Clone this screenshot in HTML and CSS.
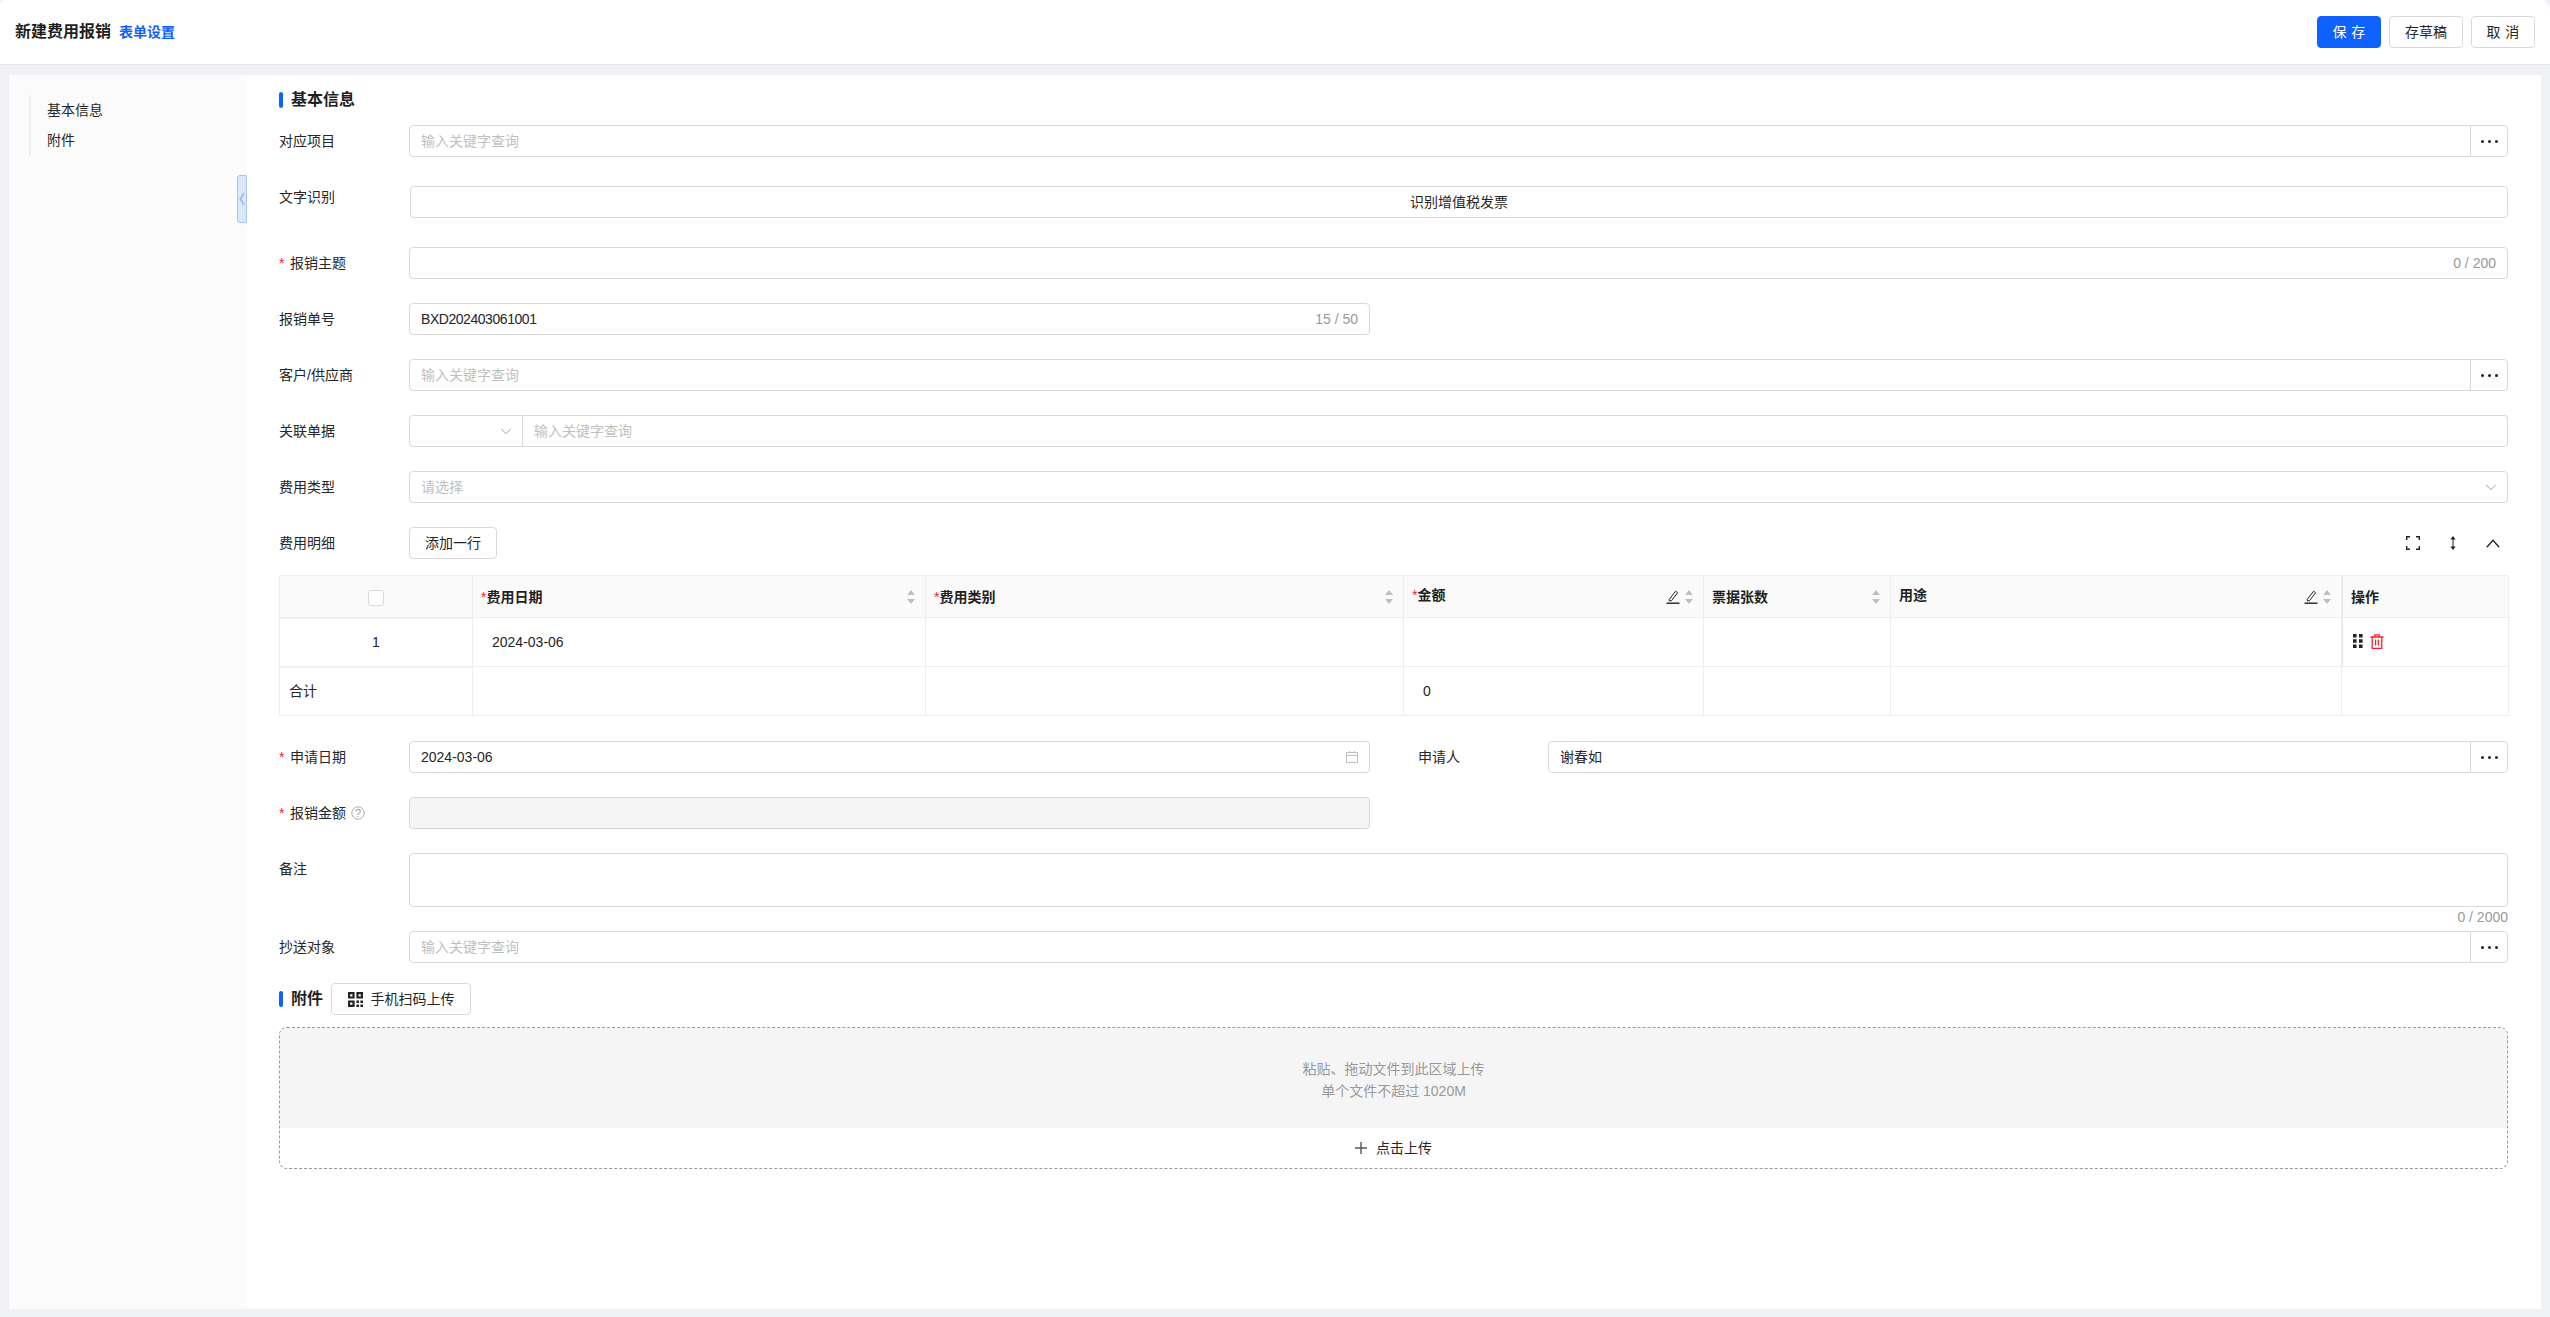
FILE: index.html
```html
<!DOCTYPE html>
<html lang="zh-CN">
<head>
<meta charset="utf-8">
<title>新建费用报销</title>
<link rel="stylesheet" href="styles.css">
</head>
<body>
<header class="topbar">
  <h1 class="page-title">新建费用报销</h1>
  <a class="form-link">表单设置</a>
  <div class="top-actions">
    <button class="btn btn-primary btn-spaced"><span>保存</span></button>
    <button class="btn btn-draft">存草稿</button>
    <button class="btn btn-spaced"><span>取消</span></button>
  </div>
</header>
<main class="shell">
  <aside class="side">
    <nav class="side-nav">
      <div class="side-item">基本信息</div>
      <div class="side-item">附件</div>
    </nav>
    <div class="side-tab"><svg width="6" height="14" viewBox="0 0 6 14"><path d="M5 1 1.5 7 5 13" fill="none" stroke="#9dbdf7" stroke-width="2"/></svg></div>
  </aside>
  <section class="form">
    <h2 class="section-title">基本信息</h2>

    <div class="row">
      <div class="label">对应项目</div>
      <div class="field picker"><span class="ph">输入关键字查询</span><span class="more"><i></i><i></i><i></i></span></div>
    </div>
    <div class="row row-ocr">
      <div class="label label-short">文字识别</div>
      <div class="field field-btn">识别增值税发票</div>
    </div>
    <div class="row">
      <div class="label"><b class="req">*</b>报销主题</div>
      <div class="field"><span class="count">0 / 200</span></div>
    </div>
    <div class="split">
      <div class="row">
        <div class="label">报销单号</div>
        <div class="field"><span class="code">BXD202403061001</span><span class="count">15 / 50</span></div>
      </div>
    </div>
    <div class="row">
      <div class="label">客户/供应商</div>
      <div class="field picker"><span class="ph">输入关键字查询</span><span class="more"><i></i><i></i><i></i></span></div>
    </div>
    <div class="row">
      <div class="label">关联单据</div>
      <div class="joined">
        <div class="field join-select"><svg class="chev" width="12" height="12" viewBox="0 0 12 12"><path d="M1 3.8 6 8.6 11 3.8" fill="none" stroke="#bfbfbf" stroke-width="1.1"/></svg></div>
        <div class="field join-input"><span class="ph">输入关键字查询</span></div>
      </div>
    </div>
    <div class="row">
      <div class="label">费用类型</div>
      <div class="field"><span class="ph">请选择</span><svg class="chev" width="12" height="12" viewBox="0 0 12 12"><path d="M1 3.8 6 8.6 11 3.8" fill="none" stroke="#bfbfbf" stroke-width="1.1"/></svg></div>
    </div>
    <div class="row row-detail">
      <div class="label">费用明细</div>
      <button class="btn btn-add">添加一行</button>
      <div class="tools">
        <svg width="14" height="14" viewBox="0 0 14 14"><path d="M.7 4V.7H4M10 .7h3.3V4M13.3 10v3.3H10M4 13.3H.7V10" fill="none" stroke="#222" stroke-width="1.4"/></svg>
        <svg width="8" height="14" viewBox="0 0 8 14"><path d="M4 2v10" stroke="#222" stroke-width="1"/><path d="M4 0 6.6 3.4H1.4zM4 14 1.4 10.6H6.6z" fill="#222"/></svg>
        <svg width="14" height="9" viewBox="0 0 14 9"><path d="M.8 8.2 7 1.2 13.2 8.2" fill="none" stroke="#222" stroke-width="1.3"/></svg>
      </div>
    </div>

    <table class="grid">
      <colgroup>
        <col class="c-idx"><col class="c-date"><col class="c-type"><col class="c-amt"><col class="c-num"><col class="c-use"><col class="c-op">
      </colgroup>
      <thead>
        <tr>
          <th class="th-check"><span class="check"></span></th>
          <th><div class="th-in"><span><b class="star">*</b>费用日期</span><span class="sort"></span></div></th>
          <th><div class="th-in"><span><b class="star">*</b>费用类别</span><span class="sort"></span></div></th>
          <th><div class="th-in"><span class="raised"><b class="star">*</b>金额</span><svg class="pen" width="14" height="14" viewBox="0 0 14 14"><path d="M3.2 9.4 9.6 1.2l2 1.6-6.2 8H3.2z" fill="none" stroke="#222" stroke-width="1"/><path d="M.5 13.2h13" stroke="#222" stroke-width="1.4"/></svg><span class="sort"></span></div></th>
          <th><div class="th-in"><span>票据张数</span><span class="sort"></span></div></th>
          <th><div class="th-in"><span class="raised">用途</span><svg class="pen" width="14" height="14" viewBox="0 0 14 14"><path d="M3.2 9.4 9.6 1.2l2 1.6-6.2 8H3.2z" fill="none" stroke="#222" stroke-width="1"/><path d="M.5 13.2h13" stroke="#222" stroke-width="1.4"/></svg><span class="sort"></span></div></th>
          <th class="th-op">操作</th>
        </tr>
      </thead>
      <tbody>
        <tr>
          <td class="td-idx">1</td>
          <td class="td-val">2024-03-06</td>
          <td></td><td></td><td></td><td></td>
          <td class="td-op">
            <svg width="10" height="14" viewBox="0 0 10 14"><path d="M0 0h3.6v3.6H0zM6 0h3.6v3.6H6zM0 5.2h3.6v3.6H0zM6 5.2h3.6v3.6H6zM0 10.4h3.6V14H0zM6 10.4h3.6V14H6z" fill="#222"/></svg>
            <svg width="14" height="15" viewBox="0 0 14 15"><path d="M.5 3h13M4.8 3V.8h4.4V3M2.2 3v11.3h9.6V3M5.6 5.6v6M8.4 5.6v6" fill="none" stroke="#f5222d" stroke-width="1.3"/></svg>
          </td>
        </tr>
        <tr>
          <td class="td-sum">合计</td>
          <td></td><td></td>
          <td class="td-val">0</td>
          <td></td><td></td><td></td>
        </tr>
      </tbody>
    </table>

    <div class="split split-after-table">
      <div class="row">
        <div class="label"><b class="req">*</b>申请日期</div>
        <div class="field"><span>2024-03-06</span><svg class="chev" width="14" height="14" viewBox="0 0 14 14"><path d="M1.5 2.5h11v10h-11zM1.5 5.5h11M4.5 1v2.5M9.5 1v2.5" fill="none" stroke="#bfbfbf" stroke-width="1"/></svg></div>
      </div>
      <div class="row">
        <div class="label">申请人</div>
        <div class="field picker"><span>谢春如</span><span class="more"><i></i><i></i><i></i></span></div>
      </div>
    </div>
    <div class="split">
      <div class="row">
        <div class="label"><b class="req">*</b>报销金额<svg class="help" width="14" height="14" viewBox="0 0 14 14"><circle cx="7" cy="7" r="6.2" fill="none" stroke="#aaa"/><text x="7" y="10.8" text-anchor="middle" class="help-q">?</text></svg></div>
        <div class="field field-off"></div>
      </div>
    </div>
    <div class="row row-note">
      <div class="label">备注</div>
      <div class="note-wrap">
        <div class="field field-area"></div>
        <div class="note-count">0 / 2000</div>
      </div>
    </div>
    <div class="row row-cc">
      <div class="label">抄送对象</div>
      <div class="field picker"><span class="ph">输入关键字查询</span><span class="more"><i></i><i></i><i></i></span></div>
    </div>

    <div class="attach-head">
      <h2 class="section-title section-inline">附件</h2>
      <button class="btn btn-qr">
        <svg width="15" height="15" viewBox="0 0 15 15"><path d="M0 0h6.6v6.6H0zM2.2 2.2v2.2h2.2V2.2zM8.4 0H15v6.6H8.4zM10.6 2.2v2.2h2.2V2.2zM0 8.4h6.6V15H0zM2.2 10.6v2.2h2.2v-2.2z" fill="#222" fill-rule="evenodd"/><path d="M8.4 8.4h2.6V11H8.4zM12.4 8.4H15V11h-2.6zM8.4 12.4h2.6V15H8.4zM12.4 12.4H15V15h-2.6z" fill="#222"/></svg>
        手机扫码上传
      </button>
    </div>
    <div class="upload">
      <div class="drop">
        <div>粘贴、拖动文件到此区域上传</div>
        <div>单个文件不超过 1020M</div>
      </div>
      <div class="pick">
        <svg width="12" height="12" viewBox="0 0 12 12"><path d="M6 0v12M0 6h12" stroke="#555" stroke-width="1.4"/></svg>
        <span>点击上传</span>
      </div>
    </div>
  </section>
</main>
</body>
</html>
```

FILE: styles.css
```css
* { box-sizing: border-box; }
html, body { margin: 0; height: 100%; }
body {
  background: #f0f1f5;
  color: #262626;
  font: 14px/22px "Liberation Sans", "Noto Sans CJK SC", sans-serif;
  overflow: hidden;
  display: flex;
  flex-direction: column;
}
.topbar {
  height: 65px;
  flex: none;
  background: #fff;
  border-bottom: 1px solid #e8e8e8;
  border-radius: 5px 10px 0 0;
  display: flex;
  align-items: center;
  padding: 0 15px;
}
.page-title { margin: 0; font-size: 16px; font-weight: 700; color: #1f1f1f; }
.form-link { margin-left: 8px; color: #0f62fe; font-weight: 700; }
.top-actions { margin-left: auto; display: flex; gap: 8px; }
.btn {
  height: 32px;
  background: #fff;
  border: 1px solid #d9d9d9;
  border-radius: 4px;
  font: inherit;
  color: #262626;
  padding: 0;
}
.btn-spaced { width: 64px; }
.btn-spaced span { letter-spacing: .34em; margin-right: -.34em; }
.btn-primary { background: #0f62fe; border-color: #0f62fe; color: #fff; }
.btn-draft { width: 74px; }
.btn-add { width: 88px; }
.btn-qr {
  width: 140px;
  margin-left: 8px;
  display: flex;
  align-items: center;
  justify-content: center;
  gap: 8px;
}

.shell {
  flex: 1;
  margin: 10px 9px 8px;
  display: flex;
  min-height: 0;
  background: #fff;
}
.side { width: 238px; flex: none; background: #fbfbfc; padding: 20px 0 0 20px; position: relative; }
.side-nav { border-left: 2px solid #eeeeee; padding-left: 16px; }
.side-item { height: 30px; line-height: 30px; }
.side-tab {
  position: absolute;
  right: 0;
  top: 100px;
  width: 10px;
  height: 48px;
  background: #dbe8ff;
  border: 1px solid #a9c6fb;
  border-radius: 3px 0 0 3px;
  display: flex;
  align-items: center;
  justify-content: center;
}

.form { flex: 1; min-width: 0; padding: 14px 33px 0 32px; }
.section-title {
  margin: 0 0 14px;
  font-size: 16px;
  font-weight: 700;
  line-height: 22px;
  color: #1f1f1f;
  display: flex;
  align-items: center;
  gap: 8px;
}
.section-title::before {
  content: "";
  width: 4px;
  height: 16px;
  background: #0f62fe;
  border-radius: 2px;
}
.section-inline { margin: 0; }

.row { display: flex; margin-bottom: 24px; }
.row-ocr { margin-bottom: 29px; margin-top: 29px; }
.label { width: 130px; flex: none; line-height: 32px; display: flex; align-items: center; height: 32px; }
.label-short { height: 22px; line-height: 22px; }
.req { color: #f5222d; font-weight: 400; width: 11px; flex: none; }
.help { margin-left: 5px; }
.help-q { font-size: 11px; fill: #999; }

.field {
  flex: 1;
  min-width: 0;
  height: 32px;
  border: 1px solid #d9d9d9;
  border-radius: 4px;
  background: #fff;
  padding: 0 11px;
  display: flex;
  align-items: center;
  justify-content: space-between;
  line-height: 30px;
}
.ph { color: #bfbfbf; }
.code { letter-spacing: -.45px; }
.count { color: #999; margin-left: auto; }
.chev { flex: none; margin-left: auto; margin-right: -1px; }
.picker { padding-right: 0; }
.more {
  width: 37px;
  height: 30px;
  border-left: 1px solid #d9d9d9;
  display: flex;
  align-items: center;
  justify-content: center;
  gap: 4px;
  margin-left: auto;
}
.more i { width: 3px; height: 3px; border-radius: 50%; background: #222; }
.field-btn { justify-content: center; margin-left: 1px; }
.field-off { background: #f5f5f5; }
.joined { flex: 1; display: flex; min-width: 0; }
.join-select { flex: none; width: 114px; border-radius: 4px 0 0 4px; }
.join-input { border-left: 0; border-radius: 0 4px 4px 0; }

.split { display: grid; grid-template-columns: 1091px 1fr; column-gap: 48px; }
.split-after-table { margin-top: 25px; }

.row-detail { margin-bottom: 16px; align-items: center; }
.tools { margin-left: auto; display: flex; align-items: center; gap: 29px; padding-right: 8px; }

.grid {
  width: 100%;
  table-layout: fixed;
  border-collapse: collapse;
  border: 1px solid #eeeeee;
}
.c-idx { width: 193px; }
.c-date { width: 453px; }
.c-type { width: 478px; }
.c-amt { width: 300px; }
.c-num { width: 187px; }
.c-use { width: 451px; }
.c-op { width: 167px; }
.grid th, .grid td { border: 1px solid #eeeeee; padding: 0; }
.grid th { height: 42px; background: #fafafa; font-weight: 700; color: #1f1f1f; text-align: left; }
.grid td { height: 49px; }
.th-in { display: flex; align-items: center; padding: 0 8px; height: 41px; }
.th-check { text-align: center !important; }
.check { display: inline-block; width: 16px; height: 16px; background: #fff; border: 1px solid #d9d9d9; border-radius: 3px; vertical-align: middle; }
.star { color: #f5222d; font-weight: 400; }
.raised { position: relative; top: -2px; }
.pen { margin-left: auto; margin-right: 5px; flex: none; }
.sort {
  width: 8px;
  height: 14px;
  flex: none;
  margin-left: auto;
  margin-right: 2px;
  position: relative;
}
.pen + .sort { margin-left: 0; }
.sort::before, .sort::after {
  content: "";
  position: absolute;
  left: 0;
  border-left: 4px solid transparent;
  border-right: 4px solid transparent;
}
.sort::before { top: 0; border-bottom: 5px solid #bfbfbf; }
.sort::after { bottom: 0; border-top: 5px solid #bfbfbf; }
.th-op { padding-left: 9px !important; box-shadow: inset 1px 0 0 #e6e6e6; }
.td-idx { text-align: center; box-shadow: inset 0 1px 0 #f0f0f0; }
.td-val { padding-left: 19px !important; }
.td-sum { padding-left: 9px !important; box-shadow: inset 0 1px 0 #f0f0f0; }
.td-op { padding-left: 11px !important; box-shadow: inset 1px 0 0 #e6e6e6; }
.td-op svg { vertical-align: middle; margin-right: 3px; position: relative; top: -2px; }

.row-note { margin-bottom: 0; }
.note-wrap { flex: 1; min-width: 0; }
.field-area { height: 54px; flex: none; }
.note-count { height: 24px; line-height: 20px; text-align: right; color: #999; }
.row-cc { margin-bottom: 20px; }

.attach-head { display: flex; align-items: center; margin-bottom: 12px; }
.upload {
  height: 142px;
  border: 1px dashed #999;
  border-radius: 8px;
  overflow: hidden;
  display: flex;
  flex-direction: column;
}
.drop {
  height: 100px;
  padding-top: 4px;
  background: #f5f5f5;
  color: #999;
  display: flex;
  flex-direction: column;
  align-items: center;
  justify-content: center;
}
.pick {
  flex: 1;
  display: flex;
  align-items: center;
  justify-content: center;
  gap: 9px;
}
```
